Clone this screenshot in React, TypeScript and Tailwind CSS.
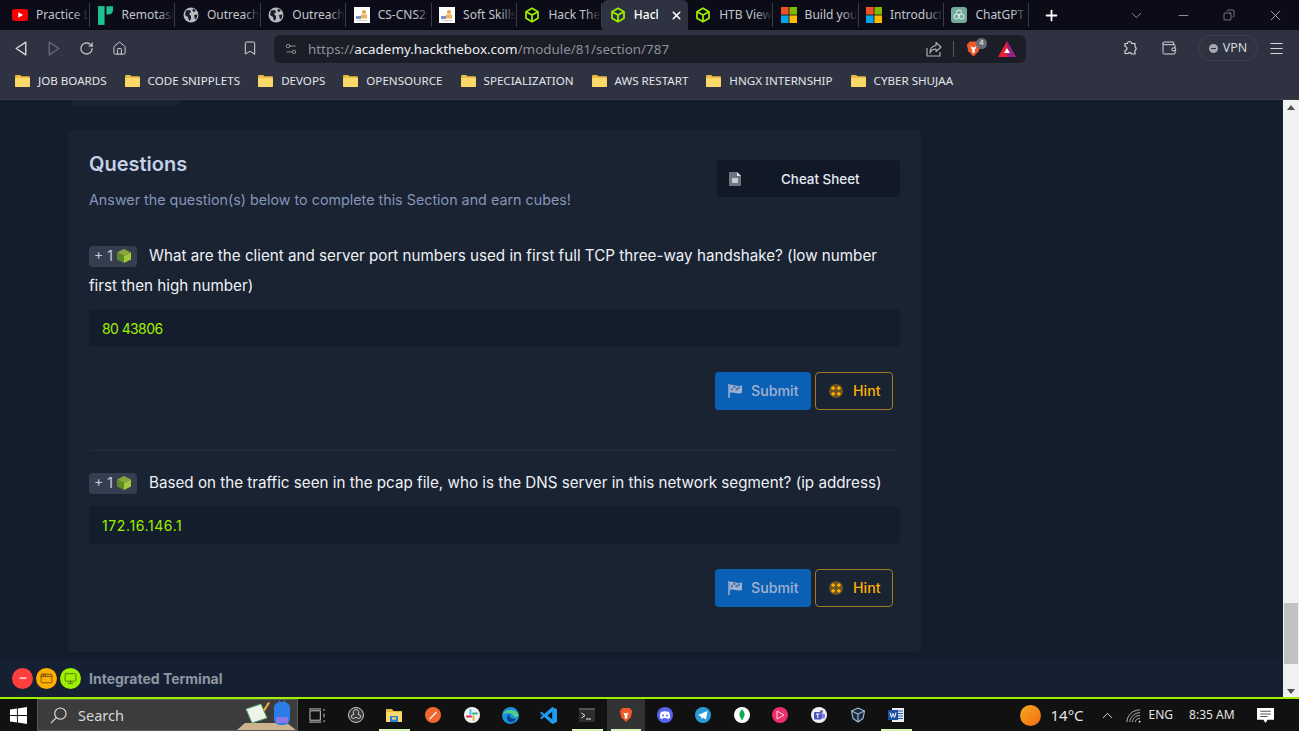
import type { ReactNode } from "react";
import {
  ChevronDown,
  ChevronUp,
  Home,
  Bookmark,
  Menu,
  Minus,
  Plus,
  RotateCw,
  Settings2,
  Wallet,
  X,
  Copy,
  Monitor,
  AppWindow,
} from "lucide-react";

const HtbCube = ({ className = "w-4 h-4" }: { className?: string }) => (
  <svg viewBox="0 0 24 24" className={className} fill="none" stroke="#9fef00" strokeWidth="2.6" strokeLinejoin="round">
    <path d="M12 2 21 7v10l-9 5-9-5V7z" />
    <path d="M3 7l9 5 9-5M12 12v10" />
  </svg>
);

const YouTube = () => (
  <svg viewBox="0 0 16 16" className="w-4 h-4">
    <rect x="0" y="2" width="16" height="12" rx="3" fill="#f00" />
    <path d="M6.3 5.2 11 8l-4.700 2.800z" fill="#fff" />
  </svg>
);

const Remotasks = () => (
  <svg viewBox="0 0 16 22" className="w-[15px] h-[21px]">
    <rect x="0" y="1" width="7" height="20" fill="#1dc48f" />
    <path d="M9 1h7v4a5 5 0 0 1-5 5H9z" fill="#1dc48f" />
  </svg>
);

const GlobeIcon = () => (
  <svg viewBox="0 0 16 16" className="w-4 h-4">
    <circle cx="8" cy="8" r="7.500" fill="#b9bbc2" />
    <path d="M3 3.500 7 3l1 2-2 2 2 2v3l-2 2-1-4-3-2zM10 1.500l3 2-2 1.500-1.500-1zM11 8l3.500-.5-1 4-1.500 1z" fill="#1b1d28" />
  </svg>
);

const SlidesThumb = () => (
  <svg viewBox="0 0 16 16" className="w-4 h-4">
    <rect width="16" height="16" fill="#fff" />
    <circle cx="10" cy="5" r="2" fill="#e8a24a" />
    <rect x="7" y="7.500" width="6" height="4" fill="#f0b060" />
    <rect x="2" y="9" width="5" height="3" fill="#7a93c8" />
    <rect x="3" y="13" width="10" height="1" fill="#d8c8b0" />
  </svg>
);

const Microsoft = () => (
  <svg viewBox="0 0 16 16" className="w-4 h-4">
    <rect width="7.600" height="7.600" fill="#f25022" />
    <rect x="8.400" width="7.600" height="7.600" fill="#7fba00" />
    <rect y="8.400" width="7.600" height="7.600" fill="#00a4ef" />
    <rect x="8.400" y="8.400" width="7.600" height="7.600" fill="#ffb900" />
  </svg>
);

const ChatGpt = () => (
  <svg viewBox="0 0 16 16" className="w-4 h-4">
    <rect width="16" height="16" rx="3" fill="#74aa9c" />
    <g fill="none" stroke="#e4f0ec" strokeWidth="1">
      <circle cx="8" cy="5.500" r="2.500" />
      <circle cx="5.500" cy="9.500" r="2.500" />
      <circle cx="10.500" cy="9.500" r="2.500" />
    </g>
  </svg>
);

const BraveLion = ({ className = "w-4 h-4" }: { className?: string }) => (
  <svg viewBox="0 0 16 18" className={className}>
    <path d="M4 1h8l2 2 1 2-1.500 6.500L8 17l-5.500-5.500L1 5l1-2z" fill="#f1592a" />
    <path d="M5 6l2 1h2l2-1-1 3-1 1 .8 2L8 13.500 6.200 12l.8-2-1-1z" fill="#fff" />
  </svg>
);

const Folder = () => (
  <svg viewBox="0 0 16 14" className="w-[15px] h-[13px] shrink-0">
    <path d="M0 2a1 1 0 0 1 1-1h4.500l1.500 1.500h8a1 1 0 0 1 1 1V13a1 1 0 0 1-1 1H1a1 1 0 0 1-1-1z" fill="#e8b93f" />
    <rect y="4" width="16" height="10" rx="1" fill="#fbd968" />
  </svg>
);

const WinLogo = () => (
  <svg viewBox="0 0 16 16" className="w-[17px] h-[17px]">
    <path d="M0 2.300 6.500 1.400v6.200H0zM7.400 1.300 16 0v7.600H7.400zM0 8.400h6.500v6.200L0 13.700zM7.400 8.400H16V16l-8.600-1.300z" fill="#fff" />
  </svg>
);

const tabs: { icon: ReactNode; title: string; active?: boolean }[] = [
  { icon: <YouTube />, title: "Practice Labs" },
  { icon: <Remotasks />, title: "Remotasks" },
  { icon: <GlobeIcon />, title: "Outreach" },
  { icon: <GlobeIcon />, title: "Outreach" },
  { icon: <SlidesThumb />, title: "CS-CNS2" },
  { icon: <SlidesThumb />, title: "Soft Skills" },
  { icon: <HtbCube />, title: "Hack The Box" },
  { icon: <HtbCube />, title: "Hack", active: true },
  { icon: <HtbCube />, title: "HTB View" },
  { icon: <Microsoft />, title: "Build your" },
  { icon: <Microsoft />, title: "Introduction" },
  { icon: <ChatGpt />, title: "ChatGPT" },
];

const bookmarks = [
  "JOB BOARDS",
  "CODE SNIPPLETS",
  "DEVOPS",
  "OPENSOURCE",
  "SPECIALIZATION",
  "AWS RESTART",
  "HNGX INTERNSHIP",
  "CYBER SHUJAA",
];

function TabBar() {
  return (
    <div className="h-[30px] bg-[#0b0c17] flex items-stretch pl-[4.600px] shrink-0">
      {tabs.map((tab, i) => (
        <div
          key={i}
          className={
            tab.active
              ? "w-[85.400px] relative flex items-center pl-[7.500px] bg-[#2f3341] rounded-t-md overflow-hidden"
              : "w-[85.400px] relative flex items-center pl-[7.500px] border-r border-[#3a3d49] my-[3px] overflow-hidden"
          }
        >
          <span className="w-4 flex justify-center shrink-0">{tab.icon}</span>
          <span
            className={
              tab.active
                ? "ml-2 text-[12px] font-medium text-white whitespace-nowrap"
                : "ml-2 text-[12px] text-[#c4c6cd] whitespace-nowrap"
            }
          >
            {tab.title}
          </span>
          {tab.active ? (
            <span className="absolute right-0 top-0 bottom-0 w-[30px] bg-[#2f3341] flex items-center justify-end pr-[5px]">
              <X size={13} strokeWidth={3} className="text-white" />
            </span>
          ) : (
            <span className="absolute right-0 top-0 bottom-0 w-4 bg-gradient-to-r from-transparent to-[#0b0c17]" />
          )}
        </div>
      ))}
      <div className="w-[44px] flex items-center justify-center">
        <Plus size={17} strokeWidth={2.500} className="text-white" />
      </div>
      <div className="w-[42px] ml-[42px] flex items-center justify-center">
        <ChevronDown size={17} strokeWidth={1} className="text-[#c4c6cd]" />
      </div>
      <div className="w-[46px] ml-[3px] flex items-center justify-center">
        <Minus size={15} strokeWidth={1} className="text-[#d8d8dc]" />
      </div>
      <div className="w-[46px] flex items-center justify-center">
        <Copy size={12} strokeWidth={1} className="text-[#d8d8dc] -scale-x-100" />
      </div>
      <div className="w-[46px] flex items-center justify-center">
        <X size={17} strokeWidth={1} className="text-[#d8d8dc]" />
      </div>
    </div>
  );
}

function Toolbar() {
  return (
    <div className="h-9 bg-[#2f3341] flex items-center shrink-0 text-[#d5d7dd]">
      <div className="w-[274px] flex items-center pl-[13px] shrink-0">
        <svg viewBox="0 0 16 16" className="w-[17px] h-[17px]" fill="none" stroke="#d5d7dd" strokeWidth="1.300" strokeLinejoin="round">
          <path d="M12 2v12L3 8z" />
        </svg>
        <svg viewBox="0 0 16 16" className="w-[17px] h-[17px] ml-[15px]" fill="none" stroke="#666a77" strokeWidth="1.300" strokeLinejoin="round">
          <path d="M4 2v12l9-6z" />
        </svg>
        <RotateCw size={15} strokeWidth={1.700} className="ml-[17px]" />
        <Home size={15} strokeWidth={1.500} className="ml-[18px]" />
        <Bookmark size={16} strokeWidth={1.500} className="ml-[115px]" />
      </div>
      <div className="w-[752px] h-7 mt-[2px] rounded-md bg-[#1b1d27] flex items-center pl-[10px] pr-[10px] shrink-0">
        <Settings2 size={14} strokeWidth={1.500} className="text-[#9b9ea8]" />
        <span className="ml-[10px] text-[13.400px] text-[#8e919c] whitespace-nowrap">
          https://<span className="text-[#eceef2]">academy.hackthebox.com</span>/module/81/section/787
        </span>
        <svg viewBox="0 0 16 16" className="w-4 h-4 ml-auto" fill="none" stroke="#b5b7bf" strokeWidth="1.100">
          <path d="M1 7v8h13v-4" />
          <path d="M10 1.500 15 6l-5 4.500V8C7 8 5 9.500 4 12c0-4 2-7 6-7.500z" strokeLinejoin="round" />
        </svg>
        <span className="w-px h-4 bg-[#555966] ml-[11px]" />
        <span className="relative ml-[12px] flex">
          <BraveLion className="w-[15px] h-[18px]" />
          <span className="absolute -top-[2px] -right-[6px] w-[11px] h-[11px] rounded-full bg-[#6a6d78] text-white text-[7px] flex items-center justify-center">
            4
          </span>
        </span>
        <svg viewBox="0 0 18 16" className="w-[18px] h-4 ml-[17px]">
          <path d="M9 0 18 16H0z" fill="#e8222e" />
          <path d="M9 0 18 16H9z" fill="#7a1fa8" opacity=".7" />
          <path d="M9 7l3 5H6z" fill="#fff" />
        </svg>
      </div>
      <svg viewBox="0 0 16 16" className="w-4 h-4 ml-[96px]" fill="none" stroke="#d5d7dd" strokeWidth="1.200" strokeLinejoin="round">
        <path d="M5.500 3.500a2 2 0 0 1 4 0H13v3.200a2 2 0 0 1 0 3.600V14H9.500a2 2 0 0 0-3.500-.5L3 13.500v-3a2 2 0 0 0 0-4v-3z" />
      </svg>
      <Wallet size={16} strokeWidth={1.500} className="ml-[23px]" />
      <div className="ml-[21px] w-[60px] h-[26px] rounded-full border border-[#3f4350] flex items-center justify-center gap-[5px]">
        <span className="w-[9px] h-[9px] rounded-full bg-[#a6a9b2] flex items-center justify-center">
          <span className="w-[5px] h-px bg-[#2f3341]" />
        </span>
        <span className="text-[12.500px] text-[#d5d7dd]">VPN</span>
      </div>
      <Menu size={17} strokeWidth={1.500} className="ml-[10px]" />
    </div>
  );
}

function BookmarksBar() {
  return (
    <div className="h-[34px] bg-[#2f3341] flex items-center pl-[15px] pb-[3px] gap-[18px] shrink-0 border-b border-[#3a3e4b]">
      {bookmarks.map((name) => (
        <div key={name} className="flex items-center gap-2">
          <Folder />
          <span className="text-[11.600px] text-[#e4e5ea] whitespace-nowrap">{name}</span>
        </div>
      ))}
    </div>
  );
}

function QuestionFooter() {
  return (
    <div className="flex justify-end gap-1 pr-[7px] mt-[25px]">
      <div className="w-24 h-[38px] rounded bg-[#0a60b5] flex items-center pl-3 text-[#a4b1cd]">
        <svg viewBox="0 0 16 16" className="w-4 h-4">
          <path d="M2 1v14" stroke="#a4b1cd" strokeWidth="1.500" />
          <path d="M3 2c4-1 6 2 12 .5V10c-5 1.500-8-1.500-12 0z" fill="#a4b1cd" />
          <path d="M6 2.500h2.500V5H6zM10.500 3.500H13V6h-2.500zM8.500 5H11v2.500H8.500zM4 5h2v2.500H4z" fill="#4d7cb8" />
        </svg>
        <span className="ml-2 text-[14.200px] font-medium">Submit</span>
      </div>
      <div className="w-[78px] h-[38px] rounded border border-[#a47a20] flex items-center pl-[13px] text-[#ffaf00]">
        <svg viewBox="0 0 14 14" className="w-[14px] h-[14px]">
          <circle cx="7" cy="7" r="7" fill="#6b5520" />
          <path d="M3 3l2.300 2.300M11 3 8.700 5.300M3 11l2.300-2.300M11 11 8.700 8.700" stroke="#ffaf00" strokeWidth="3" />
        </svg>
        <span className="ml-[10px] text-[14.200px] font-medium">Hint</span>
      </div>
    </div>
  );
}

function CubeBadge() {
  return (
    <span className="inline-flex items-center justify-center align-[0px] w-[48px] h-[21px] rounded bg-[#343e4e] text-[14px] text-[#c5cfdf] gap-[3px] mr-3 leading-none">
      + 1
      <svg viewBox="0 0 16 16" className="w-4 h-4">
        <path d="M8 1 15 4.500 8 8 1 4.500z" fill="#86a63c" />
        <path d="M1 4.500 8 8v7l-7-3.500z" fill="#5f8a2a" />
        <path d="M15 4.500 8 8v7l7-3.500z" fill="#9fc93a" />
      </svg>
    </span>
  );
}

function AnswerBox({ value, className }: { value: string; className: string }) {
  return (
    <div className="h-[38px] rounded bg-[#141d2b] flex items-center pl-[13px] text-[14px] text-[#9fef00] mt-[8px]">
      <span className={className}>{value}</span>
    </div>
  );
}

function Page() {
  return (
    <div className="flex-1 min-h-0 flex">
      <div className="flex-1 min-w-0 flex flex-col bg-[#141d2b]">
        <div className="flex-1 min-h-0 pl-[68px]">
          <div className="w-[108px] h-[6px] ml-1 rounded-b bg-[#1a2332]" />
          <div className="w-[853px] h-[522px] mt-6 rounded-md bg-[#1a2332] px-[21px] pt-[20px]">
            <div className="flex justify-between">
              <div>
                <h2 className="text-[20px] leading-[28px] font-semibold text-[#c5d0e6]">Questions</h2>
                <p className="text-[14.320px] leading-[22px] mt-[11px] text-[#8496b8]">
                  Answer the question(s) below to complete this Section and earn cubes!
                </p>
              </div>
              <div className="w-[183px] h-[37px] mt-[10px] pt-px rounded bg-[#111927] flex items-center pl-[12px] text-[13.400px] font-medium text-[#e6eaf2]">
                <svg viewBox="0 0 12 14" className="w-3 h-[14px]">
                  <path d="M0 1a1 1 0 0 1 1-1h7l4 4v9a1 1 0 0 1-1 1H1a1 1 0 0 1-1-1z" fill="#6f7580" />
                  <path d="M8 0l4 4H8z" fill="#e6e8ec" />
                  <rect x="3" y="6" width="6" height="5" fill="#c6cad0" />
                </svg>
                <span className="ml-[40px]">Cheat Sheet</span>
              </div>
            </div>

            <p className="text-[15.200px] leading-[30px] text-[#eef1f6] mt-[30px]">
              <CubeBadge />
              What are the client and server port numbers used in first full TCP three-way handshake? (low number first then high number)
            </p>
            <AnswerBox value="80 43806" className="tracking-[-0.6px]" />
            <QuestionFooter />

            <div className="h-px bg-[#212c3d] mt-[40px]" />

            <p className="text-[15.200px] leading-[30px] text-[#eef1f6] mt-[17px]">
              <CubeBadge />
              Based on the traffic seen in the pcap file, who is the DNS server in this network segment? (ip address)
            </p>
            <AnswerBox value="172.16.146.1" className="tracking-[0.6px]" />
            <QuestionFooter />
          </div>
        </div>
        <div className="h-[38px] bg-[#152033] flex items-center pl-[12px] shrink-0">
          <span className="w-[21px] h-[21px] rounded-full bg-[#ff3e3e] flex items-center justify-center">
            <Minus size={10} strokeWidth={3} className="text-white" />
          </span>
          <span className="w-[21px] h-[21px] ml-[3px] rounded-full bg-[#ffaf00] flex items-center justify-center">
            <AppWindow size={13} strokeWidth={1.500} className="text-[#5c4310]" />
          </span>
          <span className="w-[21px] h-[21px] ml-[3px] rounded-full bg-[#9fef00] flex items-center justify-center">
            <Monitor size={13} strokeWidth={1.500} className="text-[#3f6a10]" />
          </span>
          <span className="ml-[8px] text-[14px] font-bold text-[#8f96a3]">Integrated Terminal</span>
        </div>
      </div>
      <div className="w-4 bg-[#f1f1f1] flex flex-col justify-between items-center pb-[3px]">
        <span className="w-0 h-0 mt-[5px] border-x-[4px] border-x-transparent border-b-[5px] border-b-[#505050]" />
        <div className="flex flex-col items-center">
          <div className="w-[14px] h-[61px] bg-[#c1c1c1] mb-[25px]" />
          <span className="w-0 h-0 border-x-[4px] border-x-transparent border-t-[5px] border-t-[#505050]" />
        </div>
      </div>
    </div>
  );
}

const taskIcons: { key: string; icon: ReactNode; open?: boolean; active?: boolean }[] = [
  {
    key: "taskview",
    icon: (
      <svg viewBox="0 0 18 16" className="w-[17px] h-[15px]" fill="none" stroke="#d0d0d0" strokeWidth="1">
        <rect x="1" y="3" width="11" height="10" />
        <path d="M0 1h13M0 15h13M16 1v2M16 6v4M16 13v2" />
      </svg>
    ),
  },
  {
    key: "obs",
    icon: (
      <svg viewBox="0 0 16 16" className="w-4 h-4">
        <circle cx="8" cy="8" r="7.500" fill="#3a3a3a" stroke="#c8c8c8" />
        <path d="M8 2.500a3 3 0 0 1 2 5 3 3 0 0 1 3 2.500 3 3 0 0 1-5 0 3 3 0 0 1-5 0 3 3 0 0 1 3-2.500 3 3 0 0 1 2-5z" fill="none" stroke="#c8c8c8" />
      </svg>
    ),
  },
  {
    key: "files",
    open: true,
    icon: (
      <svg viewBox="0 0 16 14" className="w-4 h-[14px]">
        <path d="M0 1h6l1.500 2H16v11H0z" fill="#e8b93f" />
        <rect y="4" width="16" height="10" fill="#fbd968" />
        <rect x="4" y="8" width="8" height="6" fill="#2b83d6" />
        <rect x="6" y="9.500" width="4" height="2" fill="#fbd968" />
      </svg>
    ),
  },
  {
    key: "postman",
    icon: (
      <svg viewBox="0 0 16 16" className="w-4 h-4">
        <circle cx="8" cy="8" r="8" fill="#f0682f" />
        <path d="M4 12 11 4.500l1 1L5 12.500z" fill="#fff" />
      </svg>
    ),
  },
  {
    key: "slack",
    icon: (
      <svg viewBox="0 0 16 16" className="w-4 h-4">
        <circle cx="8" cy="8" r="8" fill="#f2f2f2" />
        <path d="M6.500 3v4" stroke="#36c5f0" strokeWidth="2" strokeLinecap="round" />
        <path d="M9 6.500h4" stroke="#2eb67d" strokeWidth="2" strokeLinecap="round" />
        <path d="M9.500 9v4" stroke="#ecb22e" strokeWidth="2" strokeLinecap="round" />
        <path d="M3 9.500h4" stroke="#e01e5a" strokeWidth="2" strokeLinecap="round" />
      </svg>
    ),
  },
  {
    key: "edge",
    icon: (
      <svg viewBox="0 0 16 16" className="w-[17px] h-[17px]">
        <circle cx="8" cy="8" r="8" fill="#1b8fd8" />
        <path d="M1 7C2 2 13 1 15.500 7c.5 2-2 3-4 2.500C11 6 5 4 1 7z" fill="#4fd08a" />
        <path d="M7 14c-3-2-3-6 0-7.500-1 3 2 5 6 5-1 2-3.500 3-6 2.500z" fill="#0b3f8c" />
      </svg>
    ),
  },
  {
    key: "vscode",
    icon: (
      <svg viewBox="0 0 16 16" className="w-[17px] h-[17px]">
        <path d="M11.500 0 16 2v12l-4.500 2L4 9.500 1.500 11.500 0 10.500 2.500 8 0 5.500l1.500-1L4 6.500zM11.500 4.500 7 8l4.500 3.500z" fill="#1f9cf0" />
      </svg>
    ),
  },
  {
    key: "terminal",
    open: true,
    icon: (
      <svg viewBox="0 0 16 14" className="w-4 h-[14px]">
        <rect width="16" height="14" fill="#2d2d2d" />
        <rect width="16" height="2" fill="#555" />
        <path d="M2.500 5 6 7.500 2.500 10" stroke="#eee" fill="none" />
        <path d="M7 11h5" stroke="#eee" />
      </svg>
    ),
  },
  { key: "brave", open: true, active: true, icon: <BraveLion className="w-[14px] h-4" /> },
  {
    key: "discord",
    icon: (
      <svg viewBox="0 0 16 16" className="w-4 h-4">
        <circle cx="8" cy="8" r="8" fill="#5865f2" />
        <path d="M4 5c2.500-1 5.500-1 8 0 1 2 1.200 4 1 6-1 .7-2 1-2.500 1l-.6-1H6.100l-.6 1c-.5 0-1.500-.3-2.500-1-.2-2 0-4 1-6z" fill="#fff" />
        <circle cx="6" cy="8.500" r="1" fill="#5865f2" />
        <circle cx="10" cy="8.500" r="1" fill="#5865f2" />
      </svg>
    ),
  },
  {
    key: "telegram",
    icon: (
      <svg viewBox="0 0 16 16" className="w-4 h-4">
        <circle cx="8" cy="8" r="8" fill="#2a9bd6" />
        <path d="M3 8 12.500 4l-1.500 8.500-3-2-1.500 1.500-.5-2.500z" fill="#fff" />
      </svg>
    ),
  },
  {
    key: "mongo",
    icon: (
      <svg viewBox="0 0 16 16" className="w-4 h-4">
        <circle cx="8" cy="8" r="8" fill="#fff" />
        <path d="M8 2c2 2.500 3 4.500 2.500 6.500C10 10.500 8.500 12 8 14c-.5-2-2-3.500-2.500-5.500C5 6.500 6 4.500 8 2z" fill="#10aa50" />
      </svg>
    ),
  },
  {
    key: "player",
    icon: (
      <svg viewBox="0 0 16 16" className="w-4 h-4">
        <circle cx="8" cy="8" r="8" fill="#ec2f6a" />
        <path d="M5 4 12 8l-7 4z" fill="none" stroke="#ffd6e2" />
      </svg>
    ),
  },
  {
    key: "teams",
    icon: (
      <svg viewBox="0 0 16 16" className="w-4 h-4">
        <circle cx="8" cy="8" r="8" fill="#f2f2f2" />
        <circle cx="10.500" cy="4.500" r="1.500" fill="#6264a7" />
        <rect x="9" y="6.500" width="5" height="5" rx="1" fill="#7b83eb" />
        <rect x="3" y="5" width="7.500" height="7.500" rx="1" fill="#4b53bc" />
        <path d="M5 7h3.500M6.750 7v4" stroke="#fff" />
      </svg>
    ),
  },
  {
    key: "vbox",
    icon: (
      <svg viewBox="0 0 16 16" className="w-4 h-4" fill="#1d2838" stroke="#9db8d8" strokeWidth="1.200" strokeLinejoin="round">
        <path d="M8 1 14.500 4 13 11.500 8 15l-5-3.500L1.500 4z" />
        <path d="M1.500 4 8 7l6.500-3M8 7v8" />
      </svg>
    ),
  },
  {
    key: "word",
    open: true,
    icon: (
      <svg viewBox="0 0 16 16" className="w-4 h-4">
        <rect x="4" y="1" width="12" height="14" fill="#e6eef8" />
        <path d="M10 4h5M10 6.500h5M10 9h5M10 11.500h5" stroke="#2b5797" />
        <rect y="3" width="10" height="10" fill="#1d4fa0" />
        <path d="M2 5.500 3.500 10.500 5 6.500 6.500 10.500 8 5.500" fill="none" stroke="#fff" />
      </svg>
    ),
  },
];

function Taskbar() {
  return (
    <div className="h-[34px] bg-[#111111] border-t-2 border-[#9fef00] flex items-stretch shrink-0">
      <div className="w-[37px] flex items-center justify-center">
        <WinLogo />
      </div>
      <div className="w-[261px] relative bg-[#3c3c3c] border border-[#5a5a5a] flex items-center pl-[12px] overflow-hidden">
        <svg viewBox="0 0 18 18" className="w-[17px] h-[17px]" fill="none" stroke="#e4e4e4" strokeWidth="1.200">
          <circle cx="11" cy="7" r="6" />
          <path d="M6.500 11.500 1 17" />
        </svg>
        <span className="ml-[11px] pt-px text-[14.500px] text-[#d8d8d8]">Search</span>
        <svg viewBox="0 0 60 32" className="absolute right-0 bottom-0 w-[60px] h-[32px]">
          <path d="M0 32 8 25H50L59 32z" fill="#cdb48e" />
          <path d="M9 11 24 6l6 14-15 5z" fill="#eef3ea" stroke="#5d9c6a" />
          <path d="M26 12 31 4l2 1-5 8z" fill="#f2a93b" />
          <rect x="37" y="4" width="16" height="23" rx="6" fill="#2a7de8" />
          <circle cx="45" cy="3" r="2.500" fill="none" stroke="#2a7de8" />
          <rect x="39" y="19" width="12" height="6" rx="1" fill="#8a7ae8" />
        </svg>
      </div>
      {taskIcons.map((item) => (
        <div
          key={item.key}
          className={
            item.active
              ? "w-[38.600px] relative flex items-center justify-center bg-[#333333]"
              : "w-[38.600px] relative flex items-center justify-center"
          }
        >
          {item.icon}
          {item.open && <span className="absolute bottom-0 left-[4px] right-[4px] h-[2px] bg-[#d6f5b8]" />}
        </div>
      ))}
      <div className="flex-1 flex items-center text-[#e4e4e4] min-w-0">
        <span className="ml-[104px] w-[21px] h-[21px] rounded-full bg-gradient-to-br from-[#f7a823] to-[#f06a0e] shrink-0" />
        <span className="ml-[10px] text-[15px] whitespace-nowrap">14°C</span>
        <ChevronUp size={17} strokeWidth={1.300} className="ml-[15px] shrink-0" />
        <svg viewBox="0 0 16 16" className="w-[15px] h-[15px] ml-[10px] shrink-0" fill="none" stroke="#bbbbbb" strokeWidth="1">
          <path d="M1 15C1 8 7 2 15 2M4 15c0-5 5-10 11-10M7 15c0-4 3-7 8-7M10 15c0-2 2-4 5-4" />
          <circle cx="14.500" cy="14.500" r="1" fill="#ffffff" stroke="none" />
        </svg>
        <span className="ml-[8px] text-[12px]">ENG</span>
        <span className="ml-[16px] text-[12px] whitespace-nowrap">8:35 AM</span>
        <svg viewBox="0 0 16 16" className="w-[17px] h-[17px] ml-[22px] shrink-0">
          <path d="M0 1h16v11h-6l-2 3-2-3H0z" fill="#fff" />
          <path d="M3 4h10M3 6.500h10M3 9h7" stroke="#555" />
        </svg>
      </div>
    </div>
  );
}

export default function App() {
  return (
    <div className="w-[1299px] h-[731px] overflow-hidden flex flex-col font-['Inter',sans-serif] [&>div:nth-child(-n+3)]:font-['Noto_Sans',sans-serif] [&>div:last-child]:font-['Noto_Sans',sans-serif]">
      <TabBar />
      <Toolbar />
      <BookmarksBar />
      <Page />
      <Taskbar />
    </div>
  );
}
